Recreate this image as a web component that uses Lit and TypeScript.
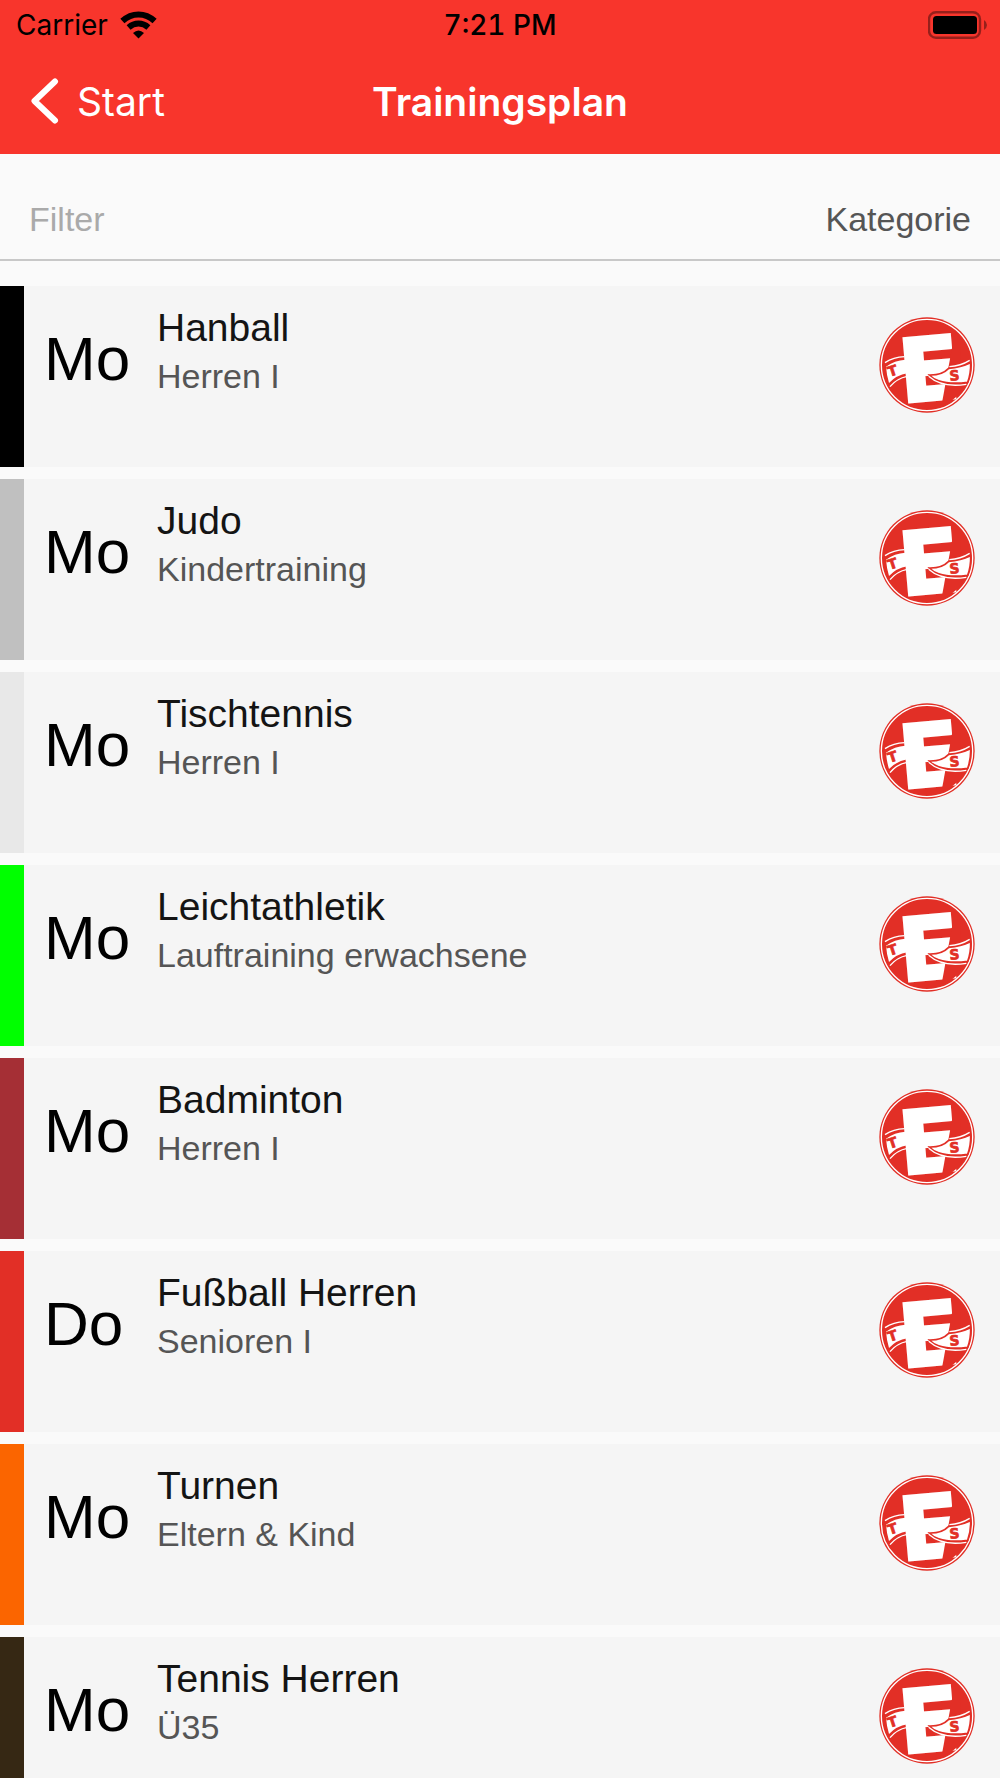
import { LitElement, html, css, svg } from "lit";
import { customElement, property } from "lit/decorators.js";

interface Training {
  day: string;
  title: string;
  group: string;
  color: string;
}

const TRAININGS: Training[] = [
  { day: "Mo", title: "Hanball", group: "Herren I", color: "#000000" },
  { day: "Mo", title: "Judo", group: "Kindertraining", color: "#c0c0c0" },
  { day: "Mo", title: "Tischtennis", group: "Herren I", color: "#e8e8e8" },
  { day: "Mo", title: "Leichtathletik", group: "Lauftraining erwachsene", color: "#00ff00" },
  { day: "Mo", title: "Badminton", group: "Herren I", color: "#a52f35" },
  { day: "Do", title: "Fußball Herren", group: "Senioren I", color: "#e22f26" },
  { day: "Mo", title: "Turnen", group: "Eltern & Kind", color: "#fb6500" },
  { day: "Mo", title: "Tennis Herren", group: "Ü35", color: "#362814" },
];

@customElement("club-logo")
export class ClubLogo extends LitElement {
  static styles = css`
    :host {
      display: block;
    }
    .logo {
      display: block;
      width: 100%;
      height: 100%;
      overflow: visible;
    }
    .mark {
      font-family: Inter, sans-serif;
      font-weight: 900;
      fill: #ffffff;
      stroke: #ffffff;
      stroke-width: 6;
    }
    .letter {
      font-family: "DejaVu Sans", sans-serif;
      font-weight: 700;
      fill: #e22f26;
      stroke: #e22f26;
      stroke-width: 2;
    }
  `;

  render() {
    return html`<svg class="logo" viewBox="27 33 288 288" role="img" aria-label="TES">
      ${svg`
        <circle cx="171" cy="177" r="143" fill="#e22f26" />
        <circle cx="171" cy="177" r="137" fill="none" stroke="#ffffff" stroke-width="4" />
        <g fill="none" stroke="#ffffff" stroke-width="4">
          <path d="M45 170 Q70 153 104 152" />
          <path d="M60 242 Q80 217 112 211" />
        </g>
        <path d="M48 182 Q74 163 106 161 L112 202 Q80 207 57 231 Q50 208 48 182Z" fill="#ffffff" />
        <text class="mark" font-size="266" x="105" y="289" transform="rotate(-5 122 289)">E</text>
        <path d="M247 120 L270 120 L274 260 L240 288 L215 296Z" fill="#e22f26" />
        <path d="M236 187 Q272 184 302 170 Q303 202 293 229 Q240 236 206 224 Q188 218 178 207 Q216 208 236 187Z" fill="#ffffff" stroke="#e22f26" stroke-width="5" />
        <g fill="none" stroke="#ffffff" stroke-width="4">
          <path d="M238 182 Q272 180 299 163" />
          <path d="M176 211 Q215 246 289 235" />
        </g>
        <text class="letter" font-size="42" x="57" y="209" transform="rotate(-18 70 206)">T</text>
        <text class="letter" font-size="42" x="239" y="223" transform="rotate(-4 254 222)">S</text>
      `}
    </svg>`;
  }
}

@customElement("training-row")
export class TrainingRow extends LitElement {
  @property({ attribute: false }) training!: Training;

  static styles = css`
    :host {
      display: flex;
      min-height: 181px;
      background: #f5f5f5;
    }
    .stripe {
      flex: none;
      width: 24px;
    }
    .day {
      flex: none;
      width: 113px;
      margin-left: 20px;
      padding-top: 37px;
      font-size: 62px;
      line-height: 72px;
      color: #000000;
    }
    .info {
      flex: 1;
      min-width: 0;
      padding-top: 18px;
    }
    .title {
      margin: 0 0 4px;
      font-size: 39px;
      font-weight: 400;
      line-height: 48px;
      color: #141414;
    }
    .group {
      margin: 0;
      font-size: 34px;
      line-height: 40px;
      color: #555555;
    }
    .badge {
      flex: none;
      width: 96px;
      height: 96px;
      margin: 31px 25px 0 16px;
    }
  `;

  render() {
    const t = this.training;
    return html`
      <div class="stripe" style="background:${t.color}"></div>
      <div class="day">${t.day}</div>
      <div class="info">
        <h2 class="title">${t.title}</h2>
        <p class="group">${t.group}</p>
      </div>
      <club-logo class="badge"></club-logo>
    `;
  }
}

@customElement("app-root")
export class AppRoot extends LitElement {
  static styles = css`
    :host {
      display: flex;
      flex-direction: column;
      height: 100vh;
      overflow: hidden;
      background: #fafafa;
      font-family: "Liberation Sans", Arial, sans-serif;
    }
    .header {
      flex: none;
      background: #f8352c;
      font-family: Inter, sans-serif;
    }
    .status,
    .nav {
      display: grid;
      grid-template-columns: 1fr auto 1fr;
      align-items: center;
    }
    .status {
      height: 50px;
      padding: 0 13px;
      font-size: 28px;
      color: #000000;
    }
    .carrier {
      display: flex;
      align-items: center;
      gap: 12px;
      padding-left: 3px;
    }
    .time {
      font-weight: 500;
      font-variant-numeric: tabular-nums;
    }
    .battery {
      justify-self: end;
    }
    .icon {
      display: block;
    }
    .nav {
      height: 102px;
      padding: 0 30px 2px;
      color: #ffffff;
    }
    .back {
      justify-self: start;
      display: flex;
      align-items: center;
      gap: 18px;
      color: inherit;
      font-size: 39px;
      text-decoration: none;
    }
    .heading {
      margin: 0;
      font-size: 39px;
      font-weight: 600;
    }
    .filter {
      flex: none;
      display: flex;
      align-items: center;
      justify-content: space-between;
      gap: 24px;
      height: 81px;
      padding: 24px 29px 0;
      border-bottom: 2px solid #c8c8c8;
    }
    .search,
    .category {
      margin: 0;
      padding: 0;
      border: 0;
      background: none;
      font: inherit;
      font-size: 34px;
      line-height: 40px;
      color: #555555;
    }
    .search {
      flex: 1;
      min-width: 0;
      outline: none;
    }
    .search::placeholder {
      color: #aaaaaa;
      opacity: 1;
    }
    .list {
      flex: 1;
      min-height: 0;
      display: flex;
      flex-direction: column;
      gap: 12px;
      margin: 0;
      padding: 25px 0 0;
      overflow-y: auto;
      scrollbar-width: none;
      list-style: none;
    }
    .item {
      flex: none;
    }
  `;

  render() {
    return html`
      <header class="header">
        <div class="status">
          <div class="carrier">
            <span>Carrier</span>
            <svg class="icon" width="37" height="28" viewBox="0 0 37 28" aria-hidden="true">
              <g fill="none" stroke="#000000" stroke-width="6">
                <path d="M2.4 10 Q9.5 3.4 18.5 3.4 Q27.5 3.4 34.6 10" />
                <path d="M8.6 16.4 Q13 12.6 18.5 12.6 Q24 12.6 28.4 16.4" />
              </g>
              <path d="M13 22 Q18.5 17 24 22 L18.5 27.4Z" fill="#000000" />
            </svg>
          </div>
          <div class="time">7:21 PM</div>
          <svg class="icon battery" width="59" height="28" viewBox="0 0 59 28" aria-hidden="true">
            <rect x="1" y="1.2" width="51" height="25.6" rx="7" fill="none" stroke="#96201b" stroke-width="2.4" />
            <rect x="5" y="5" width="44" height="18" rx="3.5" fill="#000000" />
            <path d="M56 9 Q59 11 59 14 Q59 17 56 19Z" fill="#96201b" />
          </svg>
        </div>
        <nav class="nav">
          <a class="back" href="#start">
            <svg class="icon" width="29" height="46" viewBox="0 0 29 46" aria-hidden="true">
              <path d="M25 3.5 L4.5 23 L25 42.5" fill="none" stroke="#ffffff" stroke-width="6" stroke-linecap="round" stroke-linejoin="round" />
            </svg>
            <span>Start</span>
          </a>
          <h1 class="heading">Trainingsplan</h1>
        </nav>
      </header>
      <div class="filter">
        <input class="search" type="text" placeholder="Filter" aria-label="Filter" />
        <button class="category" type="button">Kategorie</button>
      </div>
      <ul class="list">
        ${TRAININGS.map(
          (t) => html`<li class="item"><training-row .training=${t}></training-row></li>`
        )}
      </ul>
    `;
  }
}
